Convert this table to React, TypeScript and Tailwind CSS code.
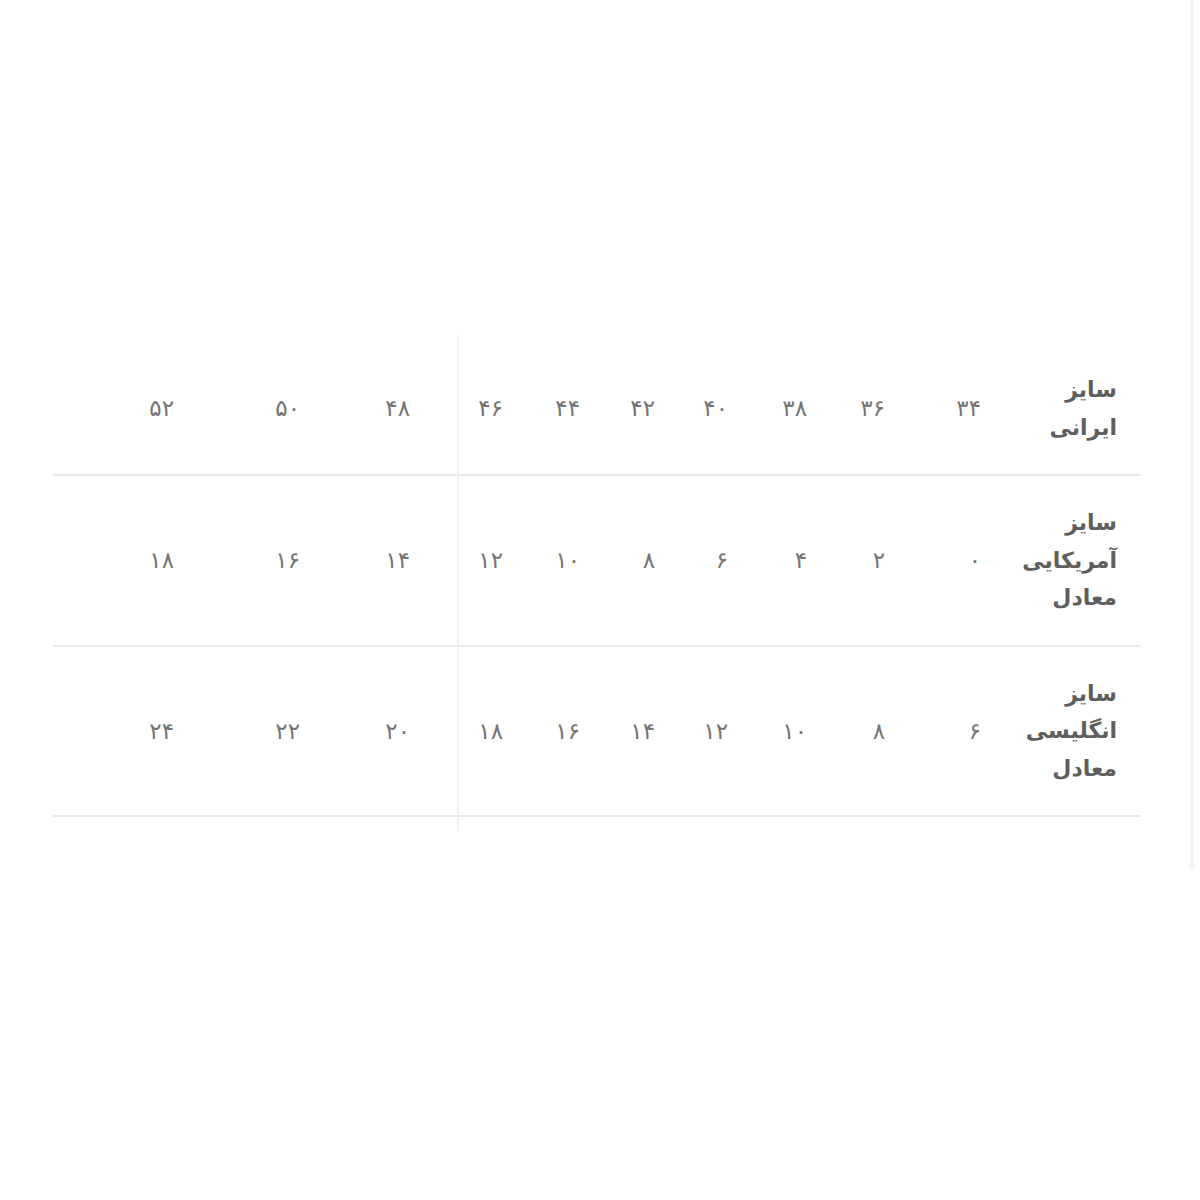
import React from "react";

const widths = [136, 96, 78, 79, 73, 75, 77, 93, 110, 126, 144];

const rows: { label: string[]; values: string[]; h: number; pt: number }[] = [
  {
    label: ["سایز", "ایرانی"],
    values: ["۳۴", "۳۶", "۳۸", "۴۰", "۴۲", "۴۴", "۴۶", "۴۸", "۵۰", "۵۲"],
    h: 141,
    pt: 8,
  },
  {
    label: ["سایز", "آمریکایی", "معادل"],
    values: ["۰", "۲", "۴", "۶", "۸", "۱۰", "۱۲", "۱۴", "۱۶", "۱۸"],
    h: 171,
    pt: 0,
  },
  {
    label: ["سایز", "انگلیسی", "معادل"],
    values: ["۶", "۸", "۱۰", "۱۲", "۱۴", "۱۶", "۱۸", "۲۰", "۲۲", "۲۴"],
    h: 170,
    pt: 0,
  },
];

export default function App() {
  return (
    <div
      className="w-[1200px] h-[1200px] bg-white flex flex-row overflow-hidden"
      style={{ fontFamily: '"DejaVu Sans", sans-serif' }}
    >
      <div className="w-[1190px] flex flex-col">
        <div className="h-[335px]" />
        <div className="relative ml-[53px] w-[1087px]" dir="rtl">
          <div className="absolute top-0 left-[404px] w-[2px] h-[497px] bg-[#f1f1f1]" />
          {rows.map((r, ri) => (
            <div
              key={ri}
              className={
                "flex flex-row items-center border-b-2 border-[#e8e8e8] " +
                (r.pt ? "pt-[8px]" : "")
              }
              style={{ height: r.h }}
            >
              <div
                className="shrink-0 pr-[23px] text-right text-[22px] leading-[37.5px] font-bold text-[#5e5e5e]"
                style={{ width: widths[0] }}
              >
                {r.label.map((l, i) => (
                  <div key={i}>{l}</div>
                ))}
              </div>
              {r.values.map((v, i) => (
                <div
                  key={i}
                  className="shrink-0 pr-[23px] text-right text-[23px] text-[#747474]"
                  style={{ width: widths[i + 1] }}
                >
                  {v}
                </div>
              ))}
            </div>
          ))}
        </div>
      </div>
      <div className="w-[4px] h-[870px] bg-[#f4f4f4]" />
    </div>
  );
}
